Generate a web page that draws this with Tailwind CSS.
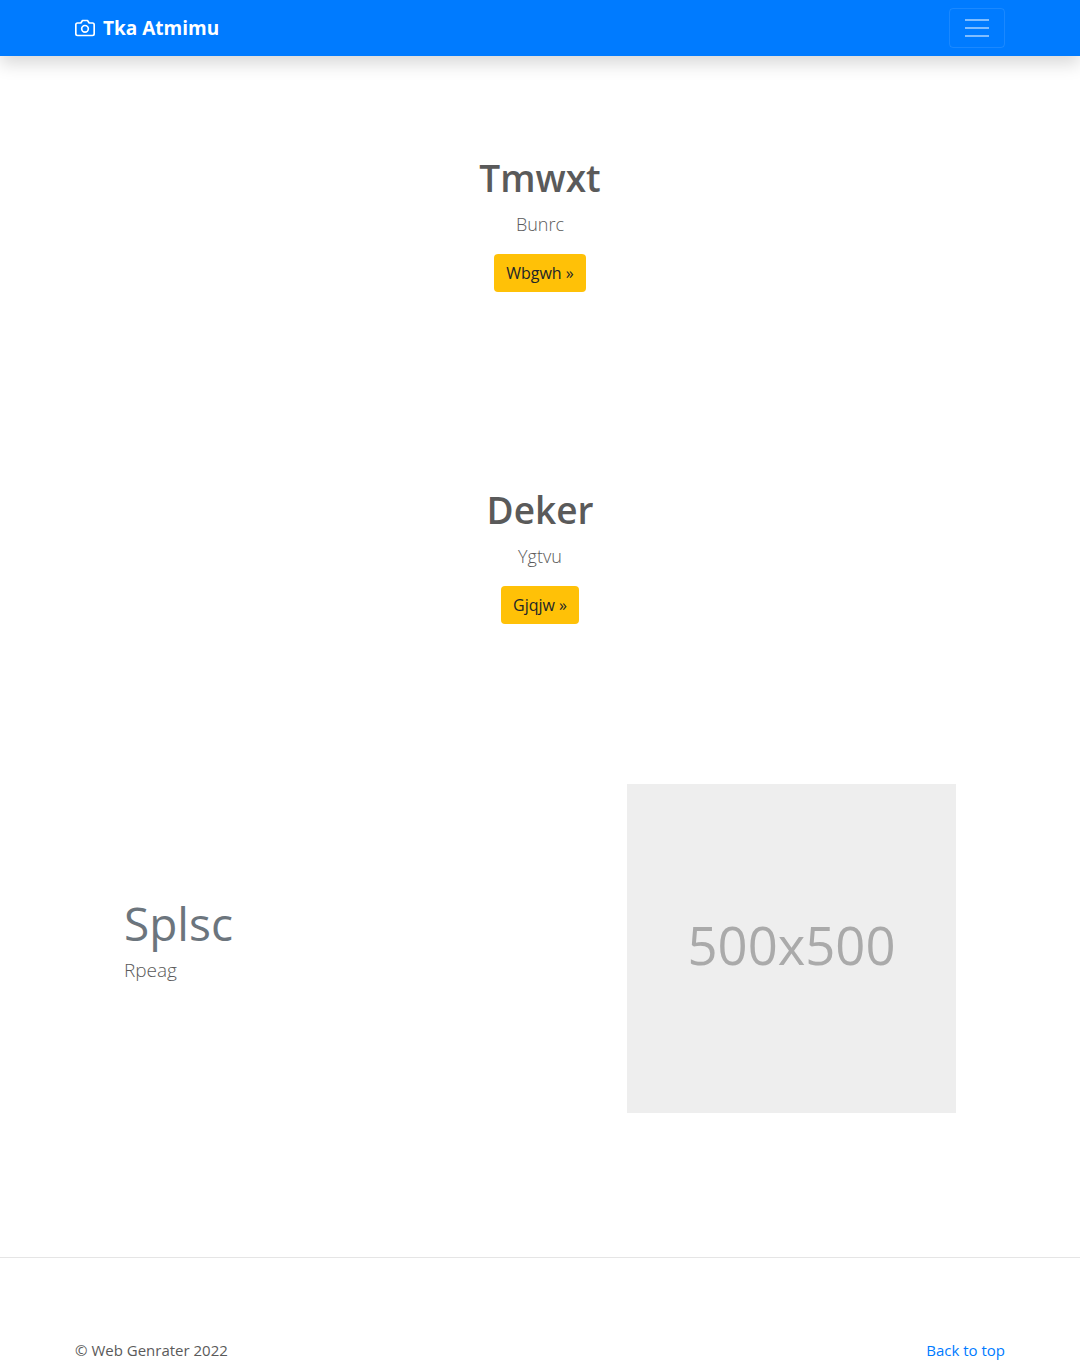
<!DOCTYPE html>
<html lang="en">
<head>
<meta charset="utf-8">
<meta name="viewport" content="width=device-width, initial-scale=1">
<title>Tka Atmimu</title>
<script src="https://cdn.jsdelivr.net/npm/@tailwindcss/browser@4"></script>
</head>
<body id="top" class="bg-white font-['Open_Sans','Noto_Sans',sans-serif] text-[15px] leading-6 text-[#5a5a5a]">
<header class="bg-[#007bff] shadow-[0_8px_16px_rgba(0,0,0,0.15)]">
  <nav class="mx-auto flex h-14 max-w-[960px] items-center justify-between px-[15px]">
    <a href="#top" class="flex items-center gap-2 text-[19px] font-bold text-white">
      <svg class="size-5" viewBox="0 0 24 24" fill="none" stroke="currentColor" stroke-width="2" stroke-linecap="round" stroke-linejoin="round" aria-hidden="true"><path d="M23 19a2 2 0 0 1-2 2H3a2 2 0 0 1-2-2V8a2 2 0 0 1 2-2h4l2-3h6l2 3h4a2 2 0 0 1 2 2z"/><circle cx="12" cy="13" r="4"/></svg>
      Tka Atmimu
    </a>
    <button type="button" aria-label="Toggle navigation" class="flex h-10 w-14 items-center justify-center rounded border border-white/10 text-white/50">
      <svg class="size-[30px]" viewBox="0 0 30 30" fill="none" stroke="currentColor" stroke-width="2" stroke-linecap="square" aria-hidden="true"><path d="M4 7h22M4 15h22M4 23h22"/></svg>
    </button>
  </nav>
</header>
<main>
  <section class="flex flex-col items-center px-4 pt-[99px] pb-24 text-center">
    <h1 class="text-[37px] leading-[46px] font-semibold">Tmwxt</h1>
    <p class="mt-2.5 mb-4 text-lg leading-[27px] font-light">Bunrc</p>
    <button type="button" class="h-[38px] rounded bg-[#ffc107] px-3 text-base text-[#212529]">Wbgwh »</button>
  </section>
  <section class="flex flex-col items-center px-4 pt-[99px] pb-24 text-center">
    <h2 class="text-[37px] leading-[46px] font-semibold">Deker</h2>
    <p class="mt-2.5 mb-4 text-lg leading-[27px] font-light">Ygtvu</p>
    <button type="button" class="h-[38px] rounded bg-[#ffc107] px-3 text-base text-[#212529]">Gjqjw »</button>
  </section>
  <section class="mx-auto flex max-w-[930px] flex-wrap items-center justify-between px-[49px] pt-16 pb-36">
    <div>
      <h2 class="text-[46px] leading-[60px] text-[#6c757d]">Splsc</h2>
      <p class="mt-1 mb-5 text-[19px] leading-[27px] font-light">Rpeag</p>
    </div>
    <svg class="w-[329px] max-w-full" viewBox="0 0 500 500" role="img" aria-label="500x500"><rect width="500" height="500" fill="#eee"/><text x="250" y="275" text-anchor="middle" font-size="80" fill="#aaa">500x500</text></svg>
  </section>
</main>
<footer class="border-t border-[#e5e5e5] pt-20">
  <div class="mx-auto flex max-w-[960px] justify-between px-[15px]">
    <p>© Web Genrater 2022</p>
    <a href="#top" class="text-[#007bff]">Back to top</a>
  </div>
</footer>
</body>
</html>
